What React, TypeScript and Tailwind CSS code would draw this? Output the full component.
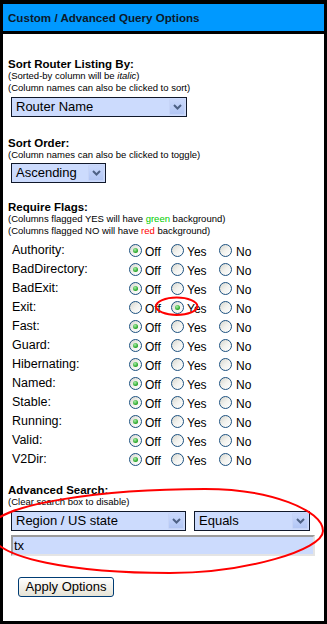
import React from 'react'

const flags = [
  'Authority',
  'BadDirectory',
  'BadExit',
  'Exit',
  'Fast',
  'Guard',
  'Hibernating',
  'Named',
  'Stable',
  'Running',
  'Valid',
  'V2Dir',
]

function Radio({ checked }: { checked?: boolean }) {
  return (
    <span className="flex h-[13px] w-[13px] shrink-0 items-center justify-center rounded-full border border-[#1c5180] bg-gradient-to-br from-[#d6d6ce] via-[#f2f2ee] to-white">
      {checked && (
        <span className="h-[5px] w-[5px] rounded-full bg-[radial-gradient(circle_at_40%_35%,#a8eea8,#21a121_70%)]" />
      )}
    </span>
  )
}

function Select({ value, width }: { value: string; width: string }) {
  return (
    <div
      className={`flex h-[20px] ${width} items-center justify-between border border-[#10182a] bg-[#ccdbfd] pl-[4px] pr-[1px]`}
    >
      <span className="text-[13px] leading-[16px] text-black">{value}</span>
      <span className="flex h-[16px] w-[16px] items-center justify-center rounded-[1px] border border-[#c6d4f7] bg-gradient-to-b from-[#c9d8fc] to-[#b2c6f4]">
        <svg width="9" height="6" viewBox="0 0 9 6">
          <path d="M1 1 L4.5 4.5 L8 1" fill="none" stroke="#4d6185" strokeWidth="2" />
        </svg>
      </span>
    </div>
  )
}

function Heading({ children, className = '' }: { children: React.ReactNode; className?: string }) {
  return <div className={`text-[11.5px] font-bold leading-[12px] text-black ${className}`}>{children}</div>
}

function Note({ children }: { children: React.ReactNode }) {
  return <div className="text-[9.5px] leading-[12px] text-black">{children}</div>
}

export default function App() {
  return (
    <div
      className="relative flex h-[624px] w-[327px] flex-col gap-[3px] overflow-hidden bg-black px-[3px] pb-[3px] pt-[4px]"
      style={{ fontFamily: '"Liberation Sans", Arial, sans-serif' }}
    >
      <div className="flex h-[27px] shrink-0 items-center bg-[#0099ff] pl-[5px]">
        <span className="text-[11.6px] font-bold text-[#0b1a2b]">Custom / Advanced Query Options</span>
      </div>

      <div className="flex flex-1 flex-col bg-white pl-[5px]">
        <Heading className="mt-[24px]">Sort Router Listing By:</Heading>
        <Note>
          (Sorted-by column will be <i>italic</i>)
        </Note>
        <Note>(Column names can also be clicked to sort)</Note>
        <div className="ml-[3px] mt-[3px]">
          <Select value="Router Name" width="w-[176px]" />
        </div>

        <Heading className="mt-[20px]">Sort Order:</Heading>
        <Note>(Column names can also be clicked to toggle)</Note>
        <div className="ml-[3px] mt-[2px]">
          <Select value="Ascending" width="w-[95px]" />
        </div>

        <Heading className="mt-[18px]">Require Flags:</Heading>
        <Note>
          (Columns flagged YES will have <span className="text-[#00cc00]">green</span> background)
        </Note>
        <Note>
          (Columns flagged NO will have <span className="text-[#ff0000]">red</span> background)
        </Note>

        <div className="mt-[3px] flex flex-col">
          {flags.map((flag) => {
            const yes = flag === 'Exit'
            return (
              <div key={flag} className="flex h-[19px] items-start text-[12px] text-black">
                <span className="ml-[4px] mt-[2px] w-[117px] text-[12.5px] leading-[16px]">{flag}:</span>
                <div className="mt-[4px] flex w-[42px] items-start gap-[3px]">
                  <Radio checked={!yes} />
                  <span className="leading-[16px]">Off</span>
                </div>
                <div className="mt-[4px] flex w-[48px] items-start gap-[3px]">
                  <Radio checked={yes} />
                  <span className="leading-[16px]">Yes</span>
                </div>
                <div className="mt-[4px] flex items-start gap-[4px]">
                  <Radio />
                  <span className="leading-[16px]">No</span>
                </div>
              </div>
            )
          })}
        </div>

        <Heading className="mt-[16px]">Advanced Search:</Heading>
        <Note>(Clear search box to disable)</Note>
        <div className="ml-[3px] mt-[3px] flex gap-[8px]">
          <Select value="Region / US state" width="w-[175px]" />
          <Select value="Equals" width="w-[116px]" />
        </div>
        <div className="ml-[3px] mt-[4px] flex h-[21px] w-[304px] items-center border-2 border-b-[#e4e4e4] border-l-[#9c9c9c] border-r-[#e4e4e4] border-t-[#9c9c9c] bg-[#ccdbfd] pl-[1px] text-[13px] text-black">
          tx
        </div>

        <button className="ml-[10px] mt-[21px] h-[20px] w-[96px] rounded-[3px] border border-[#003c74] bg-gradient-to-b from-white to-[#e6e3d6] text-[13px] leading-[16px] text-black">
          Apply Options
        </button>
      </div>

      <svg className="pointer-events-none absolute inset-0 h-full w-full" viewBox="0 0 327 624">
        <ellipse cx="176.7" cy="306.3" rx="20.7" ry="8.7" fill="none" stroke="#ff0000" strokeWidth="2" />
        <path
          d="M -10 530 C -10 503, 110 489, 205 489 C 270 489, 323 510, 323 531 C 323 550, 245 573, 170 573 C 80 573, -10 560, -10 530 Z"
          fill="none"
          stroke="#ff0000"
          strokeWidth="2"
        />
      </svg>
    </div>
  )
}
